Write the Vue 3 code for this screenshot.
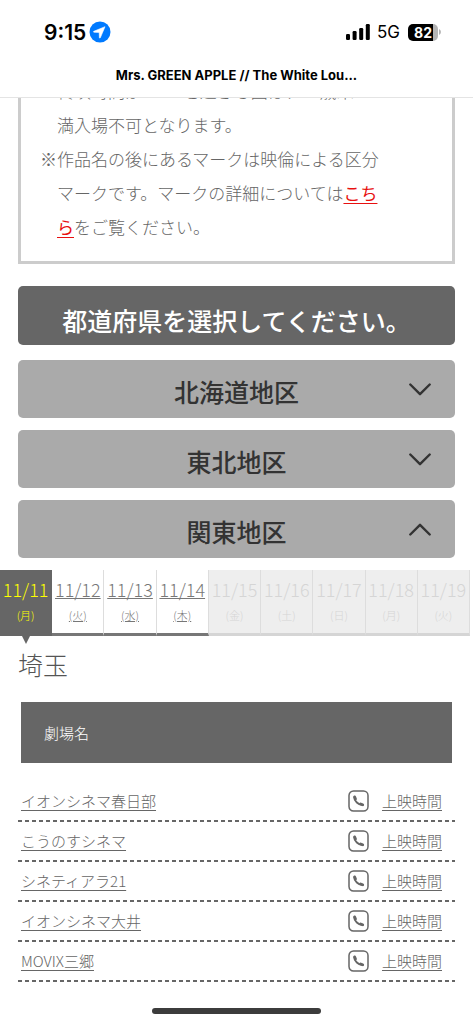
<script setup>
import { ref } from 'vue'

const areas = ref([
  { name: '北海道地区', open: false },
  { name: '東北地区', open: false },
  { name: '関東地区', open: true },
])

const days = [
  { date: '11/11', week: '月', open: true },
  { date: '11/12', week: '火', open: true },
  { date: '11/13', week: '水', open: true },
  { date: '11/14', week: '木', open: true },
  { date: '11/15', week: '金', open: false },
  { date: '11/16', week: '土', open: false },
  { date: '11/17', week: '日', open: false },
  { date: '11/18', week: '月', open: false },
  { date: '11/19', week: '火', open: false },
]
const selected = ref('11/11')

const theaters = ['イオンシネマ春日部', 'こうのすシネマ', 'シネティアラ21', 'イオンシネマ大井', 'MOVIX三郷']
</script>

<template>
  <div class="page">
    <header class="top">
      <div class="status">
        <div class="status-side">
          <span class="time">9:15</span>
          <svg class="location" viewBox="0 0 22 22" aria-hidden="true">
            <circle cx="11" cy="11" r="10.5" fill="#007aff" />
            <path d="M16 5.7 4.8 10.3c-.5.2-.4.9.1.9l5.3.2.2 5.2c0 .6.7.7.9.2z" fill="#fff" stroke="#fff" stroke-width=".6" stroke-linejoin="round" />
          </svg>
        </div>
        <div class="status-side">
          <svg class="signal" viewBox="0 0 24 16" aria-hidden="true">
            <rect x="0" y="10" width="4" height="6" rx="1.2" />
            <rect x="6.6" y="7" width="4" height="9" rx="1.2" />
            <rect x="13.2" y="4" width="4" height="12" rx="1.2" />
            <rect x="19.8" y="0" width="4" height="16" rx="1.2" />
          </svg>
          <span class="network">5G</span>
          <div class="battery">
            <span class="level">82</span>
            <svg class="tip" viewBox="0 0 2 6" aria-hidden="true"><path d="M0 0q2 1 2 3t-2 3z" fill="#b5b5b5" /></svg>
          </div>
        </div>
      </div>
      <h1 class="title">Mrs. GREEN APPLE // The White Lou...</h1>
    </header>

    <main>
      <ul class="notice">
        <li>終映時間が23:00を過ぎる回は、18歳未<br>満入場不可となります。</li>
        <li>※作品名の後にあるマークは映倫による区分マークです。マークの詳細については<a href="#">こちら</a>をご覧ください。</li>
      </ul>

      <h2 class="select-title">都道府県を選択してください。</h2>
      <div class="areas">
        <button v-for="a in areas" :key="a.name" type="button" class="area" :aria-expanded="a.open" @click="a.open = !a.open">
          <span>{{ a.name }}</span>
          <svg class="chevron" :class="{ up: a.open }" viewBox="0 0 22 13" aria-hidden="true">
            <path d="M1.3 1.5 11 11.2 20.7 1.5" fill="none" stroke="#333" stroke-width="2.4" stroke-linecap="round" stroke-linejoin="round" />
          </svg>
        </button>
      </div>

      <nav class="days">
        <template v-for="d in days" :key="d.date">
          <a v-if="d.open" href="#" class="day" :class="{ active: d.date === selected }" @click.prevent="selected = d.date">
            <span class="date">{{ d.date }}</span>
            <span class="week">({{ d.week }})</span>
          </a>
          <div v-else class="day disabled">
            <span class="date">{{ d.date }}</span>
            <span class="week">({{ d.week }})</span>
          </div>
        </template>
      </nav>

      <h3 class="pref">埼玉</h3>
      <table class="theaters">
        <thead>
          <tr><th colspan="3"><span class="head">劇場名</span></th></tr>
        </thead>
        <tbody>
          <tr v-for="t in theaters" :key="t">
            <td class="name"><a href="#">{{ t }}</a></td>
            <td class="tel">
              <a href="#" aria-label="電話">
                <svg viewBox="0 0 22 22" aria-hidden="true">
                  <rect x="1" y="1" width="19" height="20" rx="4.5" fill="none" stroke="#666" stroke-width="1.5" />
                  <path d="M6.300 7.200C6.200 11 10.500 15 14.500 15" fill="none" stroke="#666" stroke-width="2" stroke-linecap="round" />
                  <path d="M6.700 6.900 7.500 8.900M12.700 14 14.700 14.700" fill="none" stroke="#666" stroke-width="2.800" stroke-linecap="round" />
                </svg>
              </a>
            </td>
            <td class="hours"><a href="#">上映時間</a></td>
          </tr>
        </tbody>
      </table>
    </main>

    <div class="home"></div>
  </div>
</template>

<style>
body {
  margin: 0;
  background: #fff;
}
</style>

<style scoped>
.page {
  font-family: "Noto Sans CJK JP", sans-serif;
  font-weight: 300;
  color: #666;
}

.top {
  position: sticky;
  top: 0;
  z-index: 1;
  background: #fff;
  border-bottom: 1px solid #e4e4e4;
  font-family: Inter, sans-serif;
  color: #000;
}
.status {
  display: flex;
  justify-content: space-between;
  height: 64px;
  padding: 0 32px 0 44px;
}
.status-side {
  display: flex;
  align-items: center;
}
.time {
  font-size: 21px;
  font-weight: 600;
}
.location {
  width: 22px;
  height: 22px;
  margin-left: 3px;
}
.signal {
  width: 24px;
  height: 16px;
}
.network {
  margin: 0 8px 0 7px;
  font-size: 17px;
  font-weight: 400;
}
.battery {
  display: flex;
  align-items: center;
  gap: 1px;
}
.level {
  width: 30px;
  border-radius: 5px;
  background: linear-gradient(to right, #000 82%, #b5b5b5 82%);
  color: #fff;
  font-size: 14px;
  font-weight: 700;
  line-height: 17px;
  text-align: center;
}
.tip {
  width: 2px;
  height: 6px;
}
.title {
  margin: 0;
  padding-bottom: 11px;
  font-size: 13px;
  font-weight: 700;
  line-height: 22px;
  text-align: center;
}

.notice {
  margin: -24px 18px 22px;
  padding: 0 65px 17px 36px;
  border: solid #ccc;
  border-width: 0 3px 3px;
  list-style: none;
  font-size: 17px;
  line-height: 34px;
}
.notice li {
  text-indent: -17px;
}
.notice li:first-child {
  text-indent: 0;
}
.notice a {
  color: #e81010;
  font-weight: 400;
  text-underline-offset: 3px;
}

.select-title {
  margin: 0 18px 15px;
  padding: 16px 0 7px;
  border-radius: 5px;
  background: #666;
  color: #fff;
  font-size: 25px;
  font-weight: 500;
  line-height: 36px;
  text-align: center;
}
.areas {
  display: grid;
  gap: 12px;
  margin: 0 18px 12px;
}
.area {
  display: grid;
  grid-template-columns: 1fr auto 1fr;
  align-items: center;
  padding: 11px 24px;
  border: 0;
  border-radius: 5px;
  background: #aaa;
  color: #333;
  font-family: inherit;
  font-size: 25px;
  font-weight: 500;
  line-height: 36px;
}
.area span {
  grid-column: 2;
  padding-top: 2px;
  margin-bottom: -2px;
}
.chevron {
  justify-self: end;
  width: 22px;
  height: 13px;
}
.chevron.up {
  transform: rotate(180deg);
}

.days {
  display: grid;
  grid-template-columns: repeat(9, 1fr);
  margin-right: 3px;
}
.day {
  position: relative;
  display: flex;
  flex-direction: column;
  align-items: center;
  box-sizing: border-box;
  height: 66px;
  padding-top: 5px;
  border-right: 1px solid #ddd;
  border-bottom: 3px solid #777;
  color: #777;
  text-decoration: none;
}
.date {
  font-size: 18px;
  line-height: 28px;
}
.week {
  font-size: 11px;
  line-height: 24px;
}
.day span {
  text-decoration: underline;
}
.day.active {
  border-color: #666;
  background: #666;
  color: #ff0;
}
.day.active::after {
  content: "";
  position: absolute;
  top: 100%;
  left: 50%;
  margin: 3px 0 0 -4px;
  border: 4px solid transparent;
  border-top: 8px solid #666;
  border-bottom: 0;
}
.day.disabled {
  border-bottom-color: #d5d5d5;
  background: #eee;
  color: #d5d5d5;
}
.day.active span,
.day.disabled span {
  text-decoration: none;
}

.pref {
  margin: 10px 18px 20px;
  color: #555;
  font-size: 25px;
  font-weight: 300;
  line-height: 36px;
}

.theaters {
  width: calc(100% - 36px);
  margin: 0 18px;
  border-collapse: collapse;
  font-size: 15px;
}
.theaters th {
  padding: 0 3px 19px;
  font-weight: 300;
  text-align: left;
}
.head {
  display: block;
  padding: 0 23px;
  background: #666;
  color: #fff;
  line-height: 61px;
}
.theaters tbody tr {
  background: linear-gradient(to right, #666 4px, transparent 4px) left bottom / 7px 2px repeat-x;
}
.theaters td {
  box-sizing: border-box;
  height: 40px;
  padding: 0 0 3px;
}
.theaters a {
  color: #666;
  text-underline-offset: 3px;
}
.theaters .name {
  padding-left: 3px;
}
.tel {
  width: 22px;
}
.tel svg {
  display: block;
  width: 22px;
  height: 22px;
}
.theaters .hours {
  width: 85px;
  padding-right: 13px;
  text-align: right;
}

.home {
  width: 169px;
  height: 6px;
  margin: 26px auto 9px;
  border-radius: 3px;
  background: #3c3c3c;
}
</style>
